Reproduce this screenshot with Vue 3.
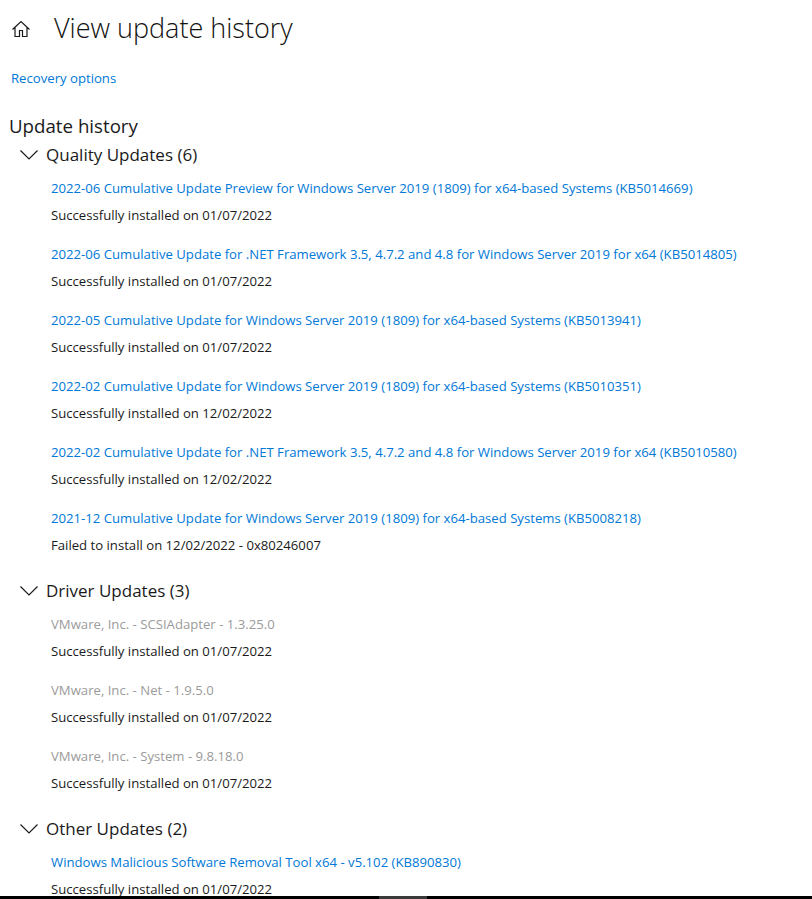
<script setup>
const groups = [
  {
    title: 'Quality Updates (6)',
    items: [
      { name: '2022-06 Cumulative Update Preview for Windows Server 2019 (1809) for x64-based Systems (KB5014669)', status: 'Successfully installed on 01/07/2022' },
      { name: '2022-06 Cumulative Update for .NET Framework 3.5, 4.7.2 and 4.8 for Windows Server 2019 for x64 (KB5014805)', status: 'Successfully installed on 01/07/2022' },
      { name: '2022-05 Cumulative Update for Windows Server 2019 (1809) for x64-based Systems (KB5013941)', status: 'Successfully installed on 01/07/2022' },
      { name: '2022-02 Cumulative Update for Windows Server 2019 (1809) for x64-based Systems (KB5010351)', status: 'Successfully installed on 12/02/2022' },
      { name: '2022-02 Cumulative Update for .NET Framework 3.5, 4.7.2 and 4.8 for Windows Server 2019 for x64 (KB5010580)', status: 'Successfully installed on 12/02/2022' },
      { name: '2021-12 Cumulative Update for Windows Server 2019 (1809) for x64-based Systems (KB5008218)', status: 'Failed to install on 12/02/2022 - 0x80246007' }
    ]
  },
  {
    title: 'Driver Updates (3)',
    items: [
      { name: 'VMware, Inc. - SCSIAdapter - 1.3.25.0', status: 'Successfully installed on 01/07/2022', muted: true },
      { name: 'VMware, Inc. - Net - 1.9.5.0', status: 'Successfully installed on 01/07/2022', muted: true },
      { name: 'VMware, Inc. - System - 9.8.18.0', status: 'Successfully installed on 01/07/2022', muted: true }
    ]
  },
  {
    title: 'Other Updates (2)',
    items: [
      { name: 'Windows Malicious Software Removal Tool x64 - v5.102 (KB890830)', status: 'Successfully installed on 01/07/2022' }
    ]
  }
]
</script>

<template>
  <div class="page">
    <header class="page-header">
      <svg class="home-icon" width="20" height="20" viewBox="0 0 20 20" fill="none" stroke="#1a1a1a" stroke-width="1.2">
        <path d="M1.5 10.5 10 2.500l8.500 8M4 8.500v9h4.500v-6h3v6H16v-9" />
      </svg>
      <h1>View update history</h1>
    </header>
    <a class="recovery">Recovery options</a>
    <h2>Update history</h2>
    <section v-for="group in groups" :key="group.title" class="group">
      <div class="group-title">
        <svg width="20" height="11" viewBox="0 0 20 11" fill="none" stroke="#1a1a1a" stroke-width="1.2">
          <path d="M1.500 1.500 10 10l8.500-8.500" />
        </svg>
        <span>{{ group.title }}</span>
      </div>
      <div v-for="item in group.items" :key="item.name" class="update">
        <div class="name" :class="{ muted: item.muted }">{{ item.name }}</div>
        <div class="status">{{ item.status }}</div>
      </div>
    </section>
    <div class="taskbar"><div class="taskbar-thumb"></div></div>
  </div>
</template>

<style>
body {
  margin: 0;
  background: #fff;
}
</style>

<style scoped>
.page {
  position: relative;
  width: 812px;
  height: 899px;
  overflow: hidden;
  background: #fff;
  color: #1a1a1a;
  font-family: "Open Sans", "Noto Sans", sans-serif;
  font-size: 13.15px;
}
.page-header {
  display: flex;
  align-items: center;
  height: 58px;
  padding-left: 11px;
}
.home-icon {
  flex: none;
  margin-right: 23px;
}
h1 {
  margin: 0;
  padding-bottom: 2px;
  font-size: 27px;
  font-weight: 300;
  line-height: 56px;
  color: #111;
}
.recovery {
  display: block;
  margin: 10px 0 0 11px;
  line-height: 20px;
  color: #0078d7;
}
h2 {
  margin: 25px 0 0 9px;
  font-size: 18.7px;
  font-weight: 400;
  line-height: 26px;
}
.group {
  padding-left: 19px;
  margin-bottom: 10px;
}
.group-title {
  display: flex;
  align-items: center;
  gap: 7px;
  height: 30px;
  font-size: 17px;
}
.update {
  padding-left: 32px;
  height: 66px;
}
.name,
.status {
  line-height: 20px;
  white-space: nowrap;
}
.name {
  padding-top: 9px;
  color: #0078d7;
}
.name.muted {
  color: #9b9b9b;
}
.status {
  margin-top: 7px;
}
.taskbar {
  position: absolute;
  left: 0;
  right: 0;
  bottom: 0;
  height: 3px;
  background: #000;
}
.taskbar-thumb {
  position: absolute;
  left: 379px;
  top: 0;
  width: 48px;
  height: 3px;
  background: #3a3a3a;
}
</style>
